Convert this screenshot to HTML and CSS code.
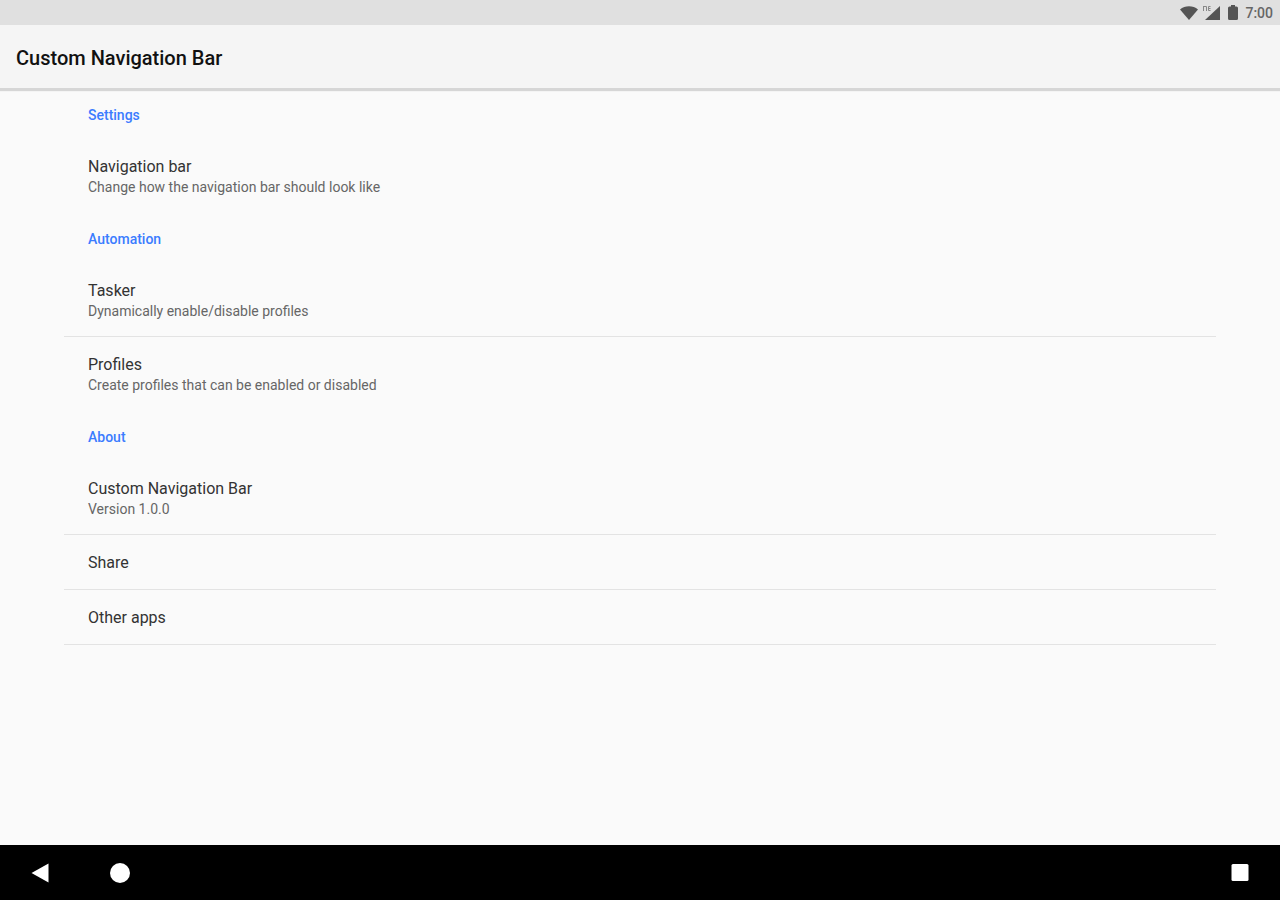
FILE: index.html
```
<!DOCTYPE html>
<html lang="en">
<head>
  <meta charset="UTF-8">
  <meta name="viewport" content="width=device-width, initial-scale=1.0">
  <title>Custom Navigation Bar</title>
  <link rel="stylesheet" href="styles.css">
</head>
<body>
  <div class="status-bar">
    <svg class="wifi" width="18" height="14" viewBox="0 0 18 14">
      <path d="M0 3.5C5 -.7 13 -.7 18 3.5L9 14z"/>
    </svg>
    <svg class="signal" width="19" height="15" viewBox="0 0 19 15">
      <path d="M18 1v14H3z"/>
      <path class="signal-type" d="M1.500 6V1M1.500 1.500h3V6M8.500 1.500h-2v4h2M6.500 3.500h2"/>
    </svg>
    <svg class="battery" width="10" height="15" viewBox="0 0 10 15">
      <path d="M3 0h4v1.500h1.500Q10 1.500 10 3v10.500Q10 15 8.500 15h-7Q0 15 0 13.500V3Q0 1.500 1.500 1.500H3z"/>
    </svg>
    <span class="clock">7:00</span>
  </div>

  <header class="app-bar">
    <h1>Custom Navigation Bar</h1>
  </header>

  <main class="preferences">
    <section>
      <h2>Settings</h2>
      <button class="item">
        <span class="title">Navigation bar</span>
        <span class="summary">Change how the navigation bar should look like</span>
      </button>
    </section>

    <section>
      <h2>Automation</h2>
      <button class="item divider">
        <span class="title">Tasker</span>
        <span class="summary">Dynamically enable/disable profiles</span>
      </button>
      <button class="item">
        <span class="title">Profiles</span>
        <span class="summary">Create profiles that can be enabled or disabled</span>
      </button>
    </section>

    <section>
      <h2>About</h2>
      <button class="item divider">
        <span class="title">Custom Navigation Bar</span>
        <span class="summary">Version 1.0.0</span>
      </button>
      <button class="item divider">
        <span class="title">Share</span>
      </button>
      <button class="item divider">
        <span class="title">Other apps</span>
      </button>
    </section>
  </main>

  <nav class="nav-bar">
    <button aria-label="Back">
      <svg width="20" height="20" viewBox="0 0 20 20"><path d="M1.500 10L18.500 .5v19z"/></svg>
    </button>
    <button aria-label="Home">
      <svg width="20" height="20" viewBox="0 0 20 20"><circle cx="10" cy="10" r="10"/></svg>
    </button>
    <button class="recents" aria-label="Recent apps">
      <svg width="20" height="20" viewBox="0 0 20 20"><rect x="1.500" y="1" width="17" height="17" rx="1.500"/></svg>
    </button>
  </nav>
</body>
</html>
```

FILE: styles.css
```
/* General Reset */
* {
  box-sizing: border-box;
  margin: 0;
  padding: 0;
}
body {
  font-family: Roboto, sans-serif;
  display: flex;
  flex-direction: column;
  min-height: 100vh;
  background-color: #fafafa;
  color: #333;
}
button {
  border: none;
  background: none;
  font-family: inherit;
  color: inherit;
  cursor: pointer;
}
/* Status Bar */
.status-bar {
  display: flex;
  align-items: center;
  justify-content: flex-end;
  height: 25px;
  padding-right: 7px;
  background-color: #e0e0e0;
  color: #666;
}
.status-bar svg {
  fill: #555;
}
.signal {
  margin-left: 4px;
}
.signal .signal-type {
  fill: none;
  stroke: #888;
}
.battery {
  margin-left: 7px;
}
.clock {
  margin-left: 7px;
  font-size: 14px;
  font-weight: 500;
}
/* App Bar */
.app-bar {
  display: flex;
  align-items: center;
  height: 63px;
  padding: 2px 16px 0;
  background-color: #f5f5f5;
  box-shadow: 0 2px 1px 1px #d6d6d6;
}
.app-bar h1 {
  font-size: 20px;
  font-weight: 500;
  color: #111;
}
/* Preference List */
.preferences {
  flex: 1;
  padding: 0 5%;
}
.preferences h2 {
  padding: 3px 24px 0;
  font-size: 14px;
  font-weight: 500;
  line-height: 48px;
  color: #3b7cff;
}
.item {
  display: block;
  width: 100%;
  padding: 17px 24px 16px;
  text-align: left;
}
.divider {
  border-bottom: 1px solid #e3e3e3;
}
.title, .summary {
  display: block;
}
.title {
  font-size: 16px;
  line-height: 21px;
}
.summary {
  padding-top: 1px;
  font-size: 14px;
  line-height: 18px;
  color: #666;
}
/* System Navigation */
.nav-bar {
  display: flex;
  height: 55px;
  background-color: #000;
}
.nav-bar button {
  display: flex;
  align-items: center;
  justify-content: center;
  width: 80px;
}
.nav-bar svg {
  fill: #fff;
}
.nav-bar .recents {
  margin-left: auto;
}
```
